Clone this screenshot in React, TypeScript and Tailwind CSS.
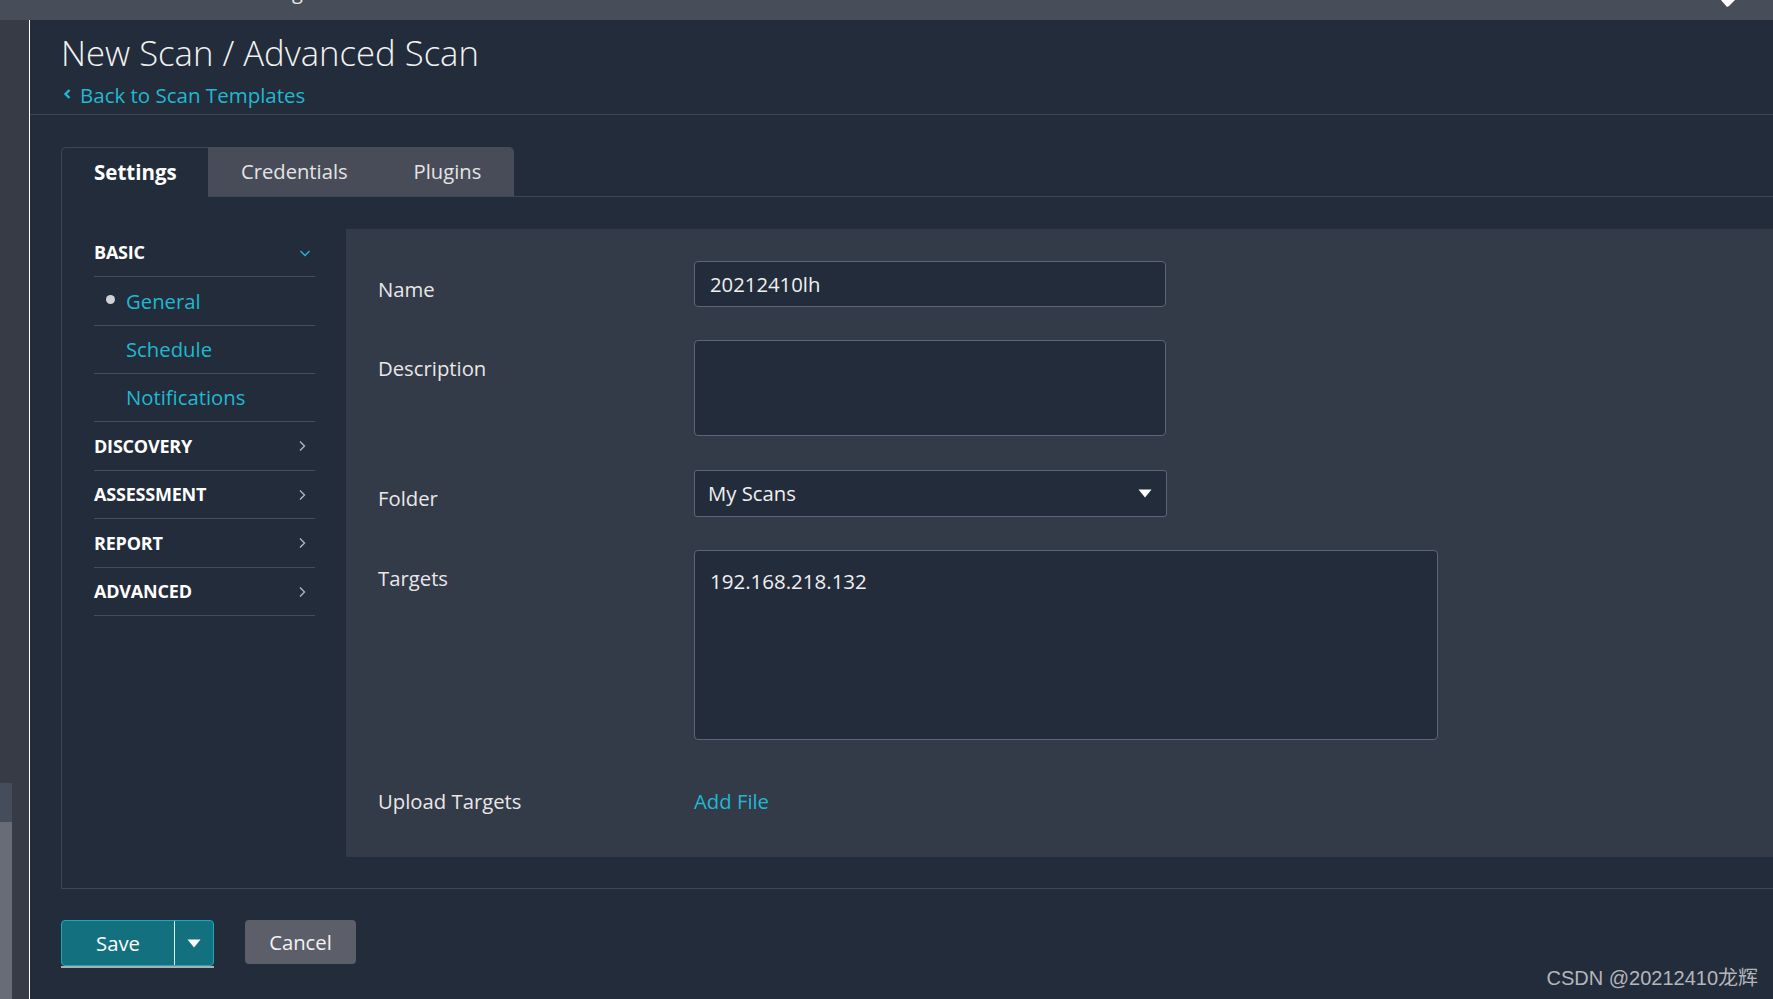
import React from "react";

const ChevronRight = () => (
  <svg width="10" height="14" viewBox="0 0 10 14" fill="none">
    <path d="M3 2.5 L7.5 7 L3 11.5" stroke="#aeb4c2" strokeWidth="1.4" />
  </svg>
);

const ChevronDown = () => (
  <svg width="14" height="10" viewBox="0 0 14 10" fill="none">
    <path d="M2.5 3 L7 7.5 L11.5 3" stroke="#20b9d1" strokeWidth="1.4" />
  </svg>
);

const Caret = () => (
  <svg width="14" height="9" viewBox="0 0 14 9">
    <path d="M0.5 0.5 H13.5 L7 8.5 Z" fill="#ffffff" />
  </svg>
);

function SideRow({ label, open, h }: { label: string; open?: boolean; h: string }) {
  return (
    <div className={`${h} border-b border-[#454d5b] flex items-center justify-between`}>
      <span className="text-[18px] font-bold text-white tracking-[-0.2px]">{label}</span>
      <span className={open ? "pr-[3px]" : "pr-[8px]"}>{open ? <ChevronDown /> : <ChevronRight />}</span>
    </div>
  );
}

function SubRow({ label, active, h }: { label: string; active?: boolean; h: string }) {
  return (
    <div className={`${h} border-b border-[#454d5b] flex items-center`}>
      <span className="w-[32px] flex justify-center pl-[1px]">
        {active ? <span className="w-[9px] h-[9px] rounded-full bg-[#cfd1d6] -mt-[4px]" /> : null}
      </span>
      <span className="text-[20.3px] text-[#20b9d1]">{label}</span>
    </div>
  );
}

const labelCls = "w-[316px] pt-[14px] text-[20.3px] leading-[28px] text-[#e8e8e8]";

export default function App() {
  return (
    <div
      className="w-[1773px] h-[999px] flex flex-col bg-[#232c3b] overflow-hidden relative"
      style={{ fontFamily: '"Open Sans", "Noto Sans", sans-serif' }}
    >
      {/* top bar */}
      <div className="h-[20px] bg-[#474e59] relative overflow-hidden shrink-0">
        <span className="absolute left-[292px] top-[-22px] text-[20px] leading-[28px] text-[#e6e6e6]">g</span>
        <svg className="absolute left-[1720px] top-0" width="16" height="8" viewBox="0 0 16 8">
          <path d="M1 0 H15 L9 6 L7 7 Z" fill="#ffffff" />
        </svg>
      </div>

      <div className="flex flex-1 min-h-0">
        {/* left strip */}
        <div className="w-[29px] bg-[#363b45] flex flex-col shrink-0">
          <div className="h-[763px]" />
          <div className="w-[12px] h-[39px] bg-[#454d5a]" />
          <div className="w-[12px] flex-1 bg-[#686c77]" />
        </div>
        <div className="w-[1px] bg-white shrink-0" />

        {/* main */}
        <div className="flex-1 flex flex-col min-w-0">
          <div className="border-b border-[#3f4755] pl-[31px] pt-[11px] pb-[5px]">
            <div className="text-[34.7px] leading-[44px] font-light text-[#f2f2f2]">
              New Scan / Advanced Scan
            </div>
            <div className="mt-[6px] flex items-center gap-[8px] text-[20.5px] leading-[28px] text-[#20b9d1]">
              <svg width="9" height="12" viewBox="0 0 9 12" className="ml-[2px] -mt-[3px]">
                <path d="M6.5 2 L2.5 6 L6.5 10" stroke="#20b9d1" strokeWidth="2.4" fill="none" />
              </svg>
              <span>Back to Scan Templates</span>
            </div>
          </div>

          {/* panel */}
          <div className="ml-[31px] mt-[32px] flex flex-col">
            <div className="flex h-[50px]">
              <div className="w-[147px] pl-[32px] border-t border-l border-[#3f4755] rounded-tl-[5px] flex items-center text-[20.5px] font-bold text-white">
                Settings
              </div>
              <div className="flex bg-[#474c58] rounded-tr-[5px] border-b border-[#3f4755]">
                <div className="px-[33px] flex items-center text-[20.2px] text-[#e4e4e4]">Credentials</div>
                <div className="px-[33px] flex items-center text-[20.2px] text-[#e4e4e4]">Plugins</div>
              </div>
              <div className="flex-1 border-b border-[#3f4755]" />
            </div>

            <div className="border-l border-b border-[#3f4755] flex pt-[32px] pb-[31px] pl-[32px]">
              {/* sidebar */}
              <div className="w-[221px] shrink-0">
                <SideRow label="BASIC" open h="h-[48px]" />
                <SubRow label="General" active h="h-[49px]" />
                <SubRow label="Schedule" h="h-[48px]" />
                <SubRow label="Notifications" h="h-[48px]" />
                <SideRow label="DISCOVERY" h="h-[49px]" />
                <SideRow label="ASSESSMENT" h="h-[48px]" />
                <SideRow label="REPORT" h="h-[49px]" />
                <SideRow label="ADVANCED" h="h-[48px]" />
              </div>

              {/* content */}
              <div className="ml-[31px] flex-1 h-[628px] bg-[#333a48] pt-[32px] pl-[32px]">
                <div className="flex mb-[33px]">
                  <div className={labelCls}>Name</div>
                  <div className="w-[472px] h-[46px] bg-[#232c3b] border border-[#5c6679] rounded-[4px] pl-[15px] flex items-center text-[20.3px] text-[#f0f0f0]">
                    20212410lh
                  </div>
                </div>
                <div className="flex mb-[34px]">
                  <div className={labelCls}>Description</div>
                  <div className="w-[472px] h-[96px] bg-[#232c3b] border border-[#5c6679] rounded-[4px]" />
                </div>
                <div className="flex mb-[33px]">
                  <div className={labelCls}>Folder</div>
                  <div className="w-[473px] h-[47px] bg-[#232c3b] border border-[#5c6679] rounded-[3px] pl-[13px] pr-[14px] flex items-center justify-between text-[20.3px] text-[#f0f0f0]">
                    <span>My Scans</span>
                    <Caret />
                  </div>
                </div>
                <div className="flex mb-[33px]">
                  <div className={labelCls}>Targets</div>
                  <div className="w-[744px] h-[190px] bg-[#232c3b] border border-[#5c6679] rounded-[4px] pl-[15px] pt-[16px] text-[20.5px] leading-[28px] text-[#f0f0f0]">
                    192.168.218.132
                  </div>
                </div>
                <div className="flex">
                  <div className={labelCls}>Upload Targets</div>
                  <div className="pt-[14px] text-[20.3px] leading-[28px] text-[#20b9d1]">Add File</div>
                </div>
              </div>
            </div>
          </div>

          {/* buttons */}
          <div className="ml-[31px] mt-[31px] flex items-start gap-[31px]">
            <div className="flex flex-col">
              <div className="flex h-[46px] w-[153px] bg-[#13717f] border border-[#1aa9bb] rounded-[4px]">
                <div className="w-[112px] flex items-center justify-center text-[20.3px] text-white">Save</div>
                <div className="w-[1px] bg-[#d8f4f8]" />
                <div className="flex-1 flex items-center justify-center">
                  <Caret />
                </div>
              </div>
              <div className="h-[2px] w-[153px] bg-[#a9adb5]" />
            </div>
            <div className="h-[44px] w-[111px] bg-[#5c5f69] rounded-[4px] flex items-center justify-center text-[20.3px] text-[#f2f2f2]">
              Cancel
            </div>
          </div>
        </div>
      </div>

      <div
        className="absolute right-[15px] bottom-[8px] text-[20px] leading-[26px] text-[#b4b6ba]"
        style={{ fontFamily: '"Liberation Sans", "Noto Sans CJK SC", sans-serif' }}
      >
        CSDN @20212410龙辉
      </div>
    </div>
  );
}
